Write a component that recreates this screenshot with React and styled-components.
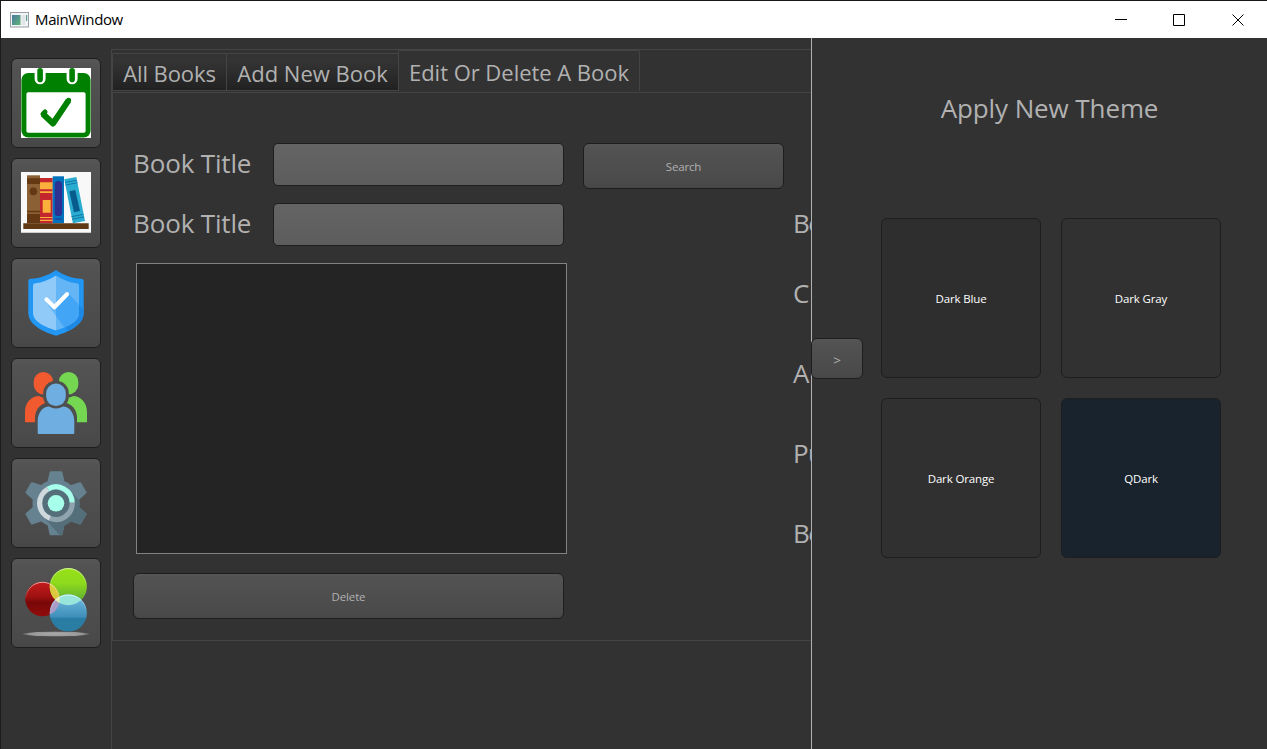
import React from "react";
import styled, { createGlobalStyle } from "styled-components";

const Global = createGlobalStyle`
  *, *::before, *::after { box-sizing: border-box; }
  body { margin: 0; overflow: hidden; background: #323232; }
  button, input { font: inherit; margin: 0; padding: 0; outline: none; }
`;

const Window = styled.div`
  display: flex;
  flex-direction: column;
  width: 1267px;
  height: 749px;
  border-top: 1px solid #17161a;
  border-left: 1px solid #1c1c1c;
  background: #323232;
  color: #b1b1b1;
  font-family: "Open Sans", "Noto Sans", sans-serif;
  font-size: 12px;
  overflow: hidden;
`;

const TitleBar = styled.header`
  display: flex;
  align-items: center;
  flex: none;
  height: 37px;
  padding-left: 9px;
  background: #fff;
  color: #000;
`;

const WindowTitle = styled.span`
  flex: 1;
  margin-left: 6px;
  padding-bottom: 1px;
  font-size: 15px;
  line-height: 20px;
  letter-spacing: -0.36px;
`;

const WindowControl = styled.button`
  display: flex;
  align-items: center;
  justify-content: center;
  width: 58.5px;
  height: 37px;
  border: 0;
  background: transparent;
`;

const Body = styled.div`
  display: flex;
  flex: 1;
  min-height: 0;
`;

const Sidebar = styled.nav`
  display: flex;
  flex-direction: column;
  flex: none;
  gap: 10px;
  width: 110px;
  padding: 20px 0 0 10px;
`;

const PushButton = styled.button`
  display: flex;
  align-items: center;
  justify-content: center;
  flex: none;
  width: ${(p) => p.$w}px;
  height: ${(p) => p.$h}px;
  border: 1px solid #1e1e1e;
  border-radius: 6px;
  background: linear-gradient(#565656, #525252 10%, #4e4e4e 50%, #4a4a4a 90%, #464646);
  color: #b1b1b1;
  font-size: ${(p) => p.$size || 11.5}px;
  padding-top: ${(p) => p.$drop || 0}px;
  letter-spacing: ${(p) => p.$track || 0}px;
`;

const Main = styled.main`
  flex: none;
  width: 700px;
  margin-top: 11px;
  border-top: 1px solid #444;
  border-left: 1px solid #444;
  overflow: hidden;
`;

const Tabs = styled.div`
  display: flex;
  align-items: flex-end;
  height: 41px;
`;

const Tab = styled.div`
  display: flex;
  align-items: center;
  justify-content: center;
  flex: none;
  width: ${(p) => p.$w}px;
  height: ${(p) => (p.$active ? 41 : 38)}px;
  border: 1px solid #444;
  border-right-width: ${(p) => (p.$active ? 1 : 0)}px;
  border-bottom-width: ${(p) => (p.$active ? 0 : 1)}px;
  border-radius: ${(p) => (p.$active ? "2px 2px 0 0" : "2px 0 0 0")};
  padding-top: 2px;
  background: ${(p) => (p.$active ? "#323232" : "linear-gradient(#323232, #343434 20%, #212121)")};
  font-size: 22px;
  line-height: 30px;
  letter-spacing: ${(p) => p.$track}px;
  white-space: nowrap;
`;

const Pane = styled.section`
  display: flex;
  width: 1100px;
  height: 549px;
  margin-top: 1px;
  border: 1px solid #444;
  padding: 50px 0 0 20px;
`;

const Editor = styled.div`
  display: flex;
  flex-direction: column;
  flex: none;
  width: 660px;
`;

const Row = styled.div`
  display: flex;
  align-items: flex-start;
  height: 60px;
`;

const Label = styled.div`
  flex: none;
  width: ${(p) => p.$w || "auto"};
  height: 42px;
  font-size: 26px;
  line-height: 41px;
  letter-spacing: ${(p) => p.$track ?? -0.15}px;
  white-space: nowrap;
`;

const Field = styled.input`
  flex: none;
  width: 291px;
  height: 43px;
  margin-right: 19px;
  border: 1px solid #1e1e1e;
  border-radius: 5px;
  background: linear-gradient(#646464, #5d5d5d);
  color: #b1b1b1;
`;

const BookList = styled.div`
  flex: none;
  width: 431px;
  height: 291px;
  margin: 0 0 19px 3px;
  border: 1px solid #828282;
  background: #242424;
`;

const Details = styled.div`
  display: flex;
  flex-direction: column;
  gap: 38px;
  padding-top: 60px;

  & > :first-child { margin-bottom: -10px; }
`;

const ThemePanel = styled.aside`
  position: relative;
  display: flex;
  flex: 1;
  align-items: flex-start;
  border-left: 1px solid #b1b1b1;
  background: #323232;
`;

const Collapse = styled.div`
  margin: 300px 0 0 -1px;
`;

const Themes = styled.div`
  display: flex;
  flex-direction: column;
  align-items: center;
  width: 376px;
`;

const ThemeHeading = styled.h1`
  margin: 50px 0 90px;
  padding-right: 3px;
  height: 40px;
  font-size: 26px;
  font-weight: 400;
  line-height: 40px;
  letter-spacing: -0.1px;
  white-space: nowrap;
`;

const ThemeGrid = styled.div`
  display: grid;
  grid-template-columns: 160px 160px;
  gap: 20px;
`;

const ThemeTile = styled.button`
  height: 160px;
  border: 1px solid #1e1e1e;
  border-radius: 6px;
  background: ${(p) => p.$bg};
  color: #fff;
  font-size: 11.5px;
  letter-spacing: -0.15px;
`;

const Icon = ({ children }) => (
  <svg width="70" height="70" viewBox="0 0 70 70" fill="none">{children}</svg>
);

const AppIcon = () => (
  <svg width="19" height="16" viewBox="0 0 19 16">
    <defs>
      <linearGradient id="app" x1="0" y1="0" x2="1" y2="1">
        <stop stopColor="#4b79a4" /><stop offset="1" stopColor="#5fb574" />
      </linearGradient>
    </defs>
    <rect x=".5" y=".5" width="18" height="14.5" fill="#f2f4f5" stroke="#9a9fa3" />
    <rect x="2" y="3" width="8.5" height="10" fill="url(#app)" />
    <rect x="11.5" y="3" width="4" height="10" fill="#e2e6e8" />
    <rect x="16" y="3" width="1.2" height="6" fill="#5d9f96" />
  </svg>
);

const CalendarIcon = () => (
  <Icon>
    <path fill="#fff" d="M0 0h70v70H0z" />
    <rect x=".4" y="5" width="69.2" height="64.6" rx="7" fill="#008000" />
    <rect x="5.4" y="24.3" width="59.2" height="40.4" rx="1.8" fill="#fff" />
    <path d="M19.1 0v10.8M51.1 0v10.8" stroke="#fff" strokeWidth="11" strokeLinecap="round" />
    <path d="M19.1 2.8v8.6M51.1 2.8v8.6" stroke="#008000" strokeWidth="5.6" strokeLinecap="round" />
    <path d="M22 46l10 9.5 15.6-23.2" stroke="#008000" strokeWidth="6" strokeLinejoin="round" />
    <path d="M22 46l2-2M47.6 32.3l-1.5 2" stroke="#008000" strokeWidth="5" strokeLinecap="round" />
  </Icon>
);

const BooksIcon = () => (
  <Icon>
    <path fill="#f8f8f8" d="M0 4h70v60.8H0z" />
    <path fill="#8a6034" d="M6 7.3h13v48H6z" />
    <path fill="#633813" d="M6 10.3h13V16H6zM6 42.7h13v1.6H6zM6 46h13v9.3H6z" />
    <circle cx="12.4" cy="23.4" r="3.8" fill="#633813" />
    <path fill="#c4262e" d="M19 10h12.7v45.3H19z" />
    <path fill="#fbb03b" d="M19 14.3h12.7v7H19zM19 23.3h12.7V25H19zM21.7 32h8v12.8h-8zM19 49h12.7v1H19zM19 51.7h12.7v1.2H19z" />
    <path fill="#0071bc" d="M31.7 8.3H43v47H31.7z" />
    <rect x="33.8" y="13" width="7.3" height="35" rx="3.6" fill="#2e3192" />
    <path stroke="#2e3192" d="M34 51h7" />
    <path fill="#2aabd0" d="M43.3 11.3L55.3 9 64 53l-12.1 2.3z" />
    <path fill="#085c8d" d="M48.3 23.2l6-1.2L59 43.1l-6 1.2z" />
    <path stroke="#07699a" strokeWidth=".8" d="M44 14.5L56 12.2M44.5 17L56.5 14.7M50.4 48.7l12-2.3M51 51.2l12-2.3" />
    <path fill="#603813" d="M2.3 55.3h65.4V61H2.3z" />
  </Icon>
);

const ShieldIcon = () => (
  <Icon>
    <defs>
      <clipPath id="shieldOuter"><path d="M35 2C27 7.4 19 10.7 10 10.7Q7.3 11 7.3 13.5v31C7.3 57 22 63.8 35 67.7 48 63.8 62.7 57 62.7 44.5v-31q0-2.5-2.7-2.8C51 10.7 43 7.4 35 2z" /></clipPath>
      <clipPath id="shieldInner"><path d="M35 7.5C28 11.8 21 14.7 14.3 15.2q-2.3.2-2.3 2.6v27C12 54 24 58.8 35 62.5 46 58.8 58 54 58 44.8v-27q0-2.4-2.3-2.6C49 14.7 42 11.8 35 7.5z" /></clipPath>
    </defs>
    <g clipPath="url(#shieldOuter)">
      <path fill="#2196f3" d="M0 0h70v70H0z" />
      <path fill="#1e88e5" d="M47.5 25.5L70 50v20H52L35 46z" />
    </g>
    <g clipPath="url(#shieldInner)">
      <path fill="#90caf9" d="M0 0h35v70H0z" />
      <path fill="#64b5f6" d="M35 0h35v70H35z" />
      <path fill="#64b5f6" d="M24.500 33.500L35 48V39z" />
      <path fill="#42a5f5" d="M47.700 25.500L70 50v20H51L35 48v-9z" />
    </g>
    <path d="M25.500 31.500l7.800 7.700L46 26.300" stroke="#fff" strokeWidth="4.200" strokeLinecap="round" strokeLinejoin="round" />
  </Icon>
);

const PeopleIcon = () => (
  <Icon>
    <rect x="12.7" y="4" width="19.4" height="22.4" rx="9.700" fill="#f1592f" />
    <rect x="37.900" y="4" width="19.400" height="22.400" rx="9.700" fill="#74d651" />
    <path fill="#f1592f" d="M4 54.300V44C4 34 11 28 18 28q5 3 9 0L36 40v14.300z" />
    <path fill="#74d651" d="M66 54.300V44C66 34 59 28 52 28q-5 3-9 0L34 40v14.300z" />
    <path fill="#4e4e4e" d="M14 57V50c0-9 6-14 11-15h20c5 1 11 6 11 15v7z" />
    <rect x="22.200" y="12.800" width="25.600" height="28" rx="12.400" fill="#4f4f4f" />
    <rect x="25.200" y="15.600" width="19.600" height="22.400" rx="9.600" fill="#6faee0" />
    <path fill="#6faee0" d="M16.700 65V53c0-8.500 5.500-14.500 11.300-14.500q7 4 14 0c5.800 0 11.300 6 11.300 14.500v12q0 1-1 1H17.700q-1 0-1-1z" />
  </Icon>
);

const GearIcon = () => (
  <Icon>
    <defs>
      <clipPath id="gear">
        {[0, 60, 120, 180, 240, 300].map((a) => (
          <path key={a} transform={`rotate(${a} 35 35.300)`} d="M29.600 3.300h10.800q.8 0 1 .9l2 9L48 35H22l4.600-21.800 2-9q.2-.9 1-.9z" />
        ))}
        <circle cx="35" cy="35.300" r="23.500" />
      </clipPath>
    </defs>
    <g clipPath="url(#gear)">
      <path fill="#668290" d="M0 0h70v70H0z" />
      <path fill="#546e7a" d="M48 22l22 22v26H41L23 49z" />
    </g>
    <circle cx="35" cy="35.300" r="13.500" fill="#546e7a" />
    <path d="M27 21A16.200 16.200 0 0 1 51.200 34.700" stroke="#a7ffeb" strokeWidth="5.200" />
    <path d="M51.200 34.700A16.200 16.200 0 0 1 29 50.300" stroke="#90a4ae" strokeWidth="5.200" />
    <path d="M29 50.300A16.200 16.200 0 0 1 27 21" stroke="#cfd8dc" strokeWidth="5.200" />
    <circle cx="35" cy="35.300" r="8.300" fill="#a7ffeb" />
  </Icon>
);

const ColorsIcon = () => (
  <Icon>
    <defs>
      <linearGradient id="red" x2="0" y2="1"><stop stopColor="#c51c1c" /><stop offset=".45" stopColor="#9c1111" /><stop offset=".6" stopColor="#780808" /><stop offset="1" stopColor="#920b0b" /></linearGradient>
      <linearGradient id="green" x2="0" y2="1"><stop stopColor="#98e018" /><stop offset=".4" stopColor="#8edb1c" /><stop offset="1" stopColor="#55a23b" /></linearGradient>
      <linearGradient id="blue" x2="0" y2="1"><stop stopColor="#72bfe2" /><stop offset=".6" stopColor="#408fbb" /><stop offset=".65" stopColor="#297ca4" /><stop offset="1" stopColor="#2b7da2" /></linearGradient>
      <linearGradient id="shine" x2="0" y2="1"><stop stopColor="#fff" stopOpacity=".6" /><stop offset=".5" stopColor="#fff" stopOpacity="0" /></linearGradient>
      <radialGradient id="floor"><stop stopColor="#aaa" /><stop offset=".8" stopColor="#989898" /><stop offset="1" stopColor="#666" stopOpacity=".4" /></radialGradient>
      <clipPath id="inGreen"><circle cx="47.300" cy="18.600" r="18.600" /></clipPath>
      <clipPath id="inBlue"><circle cx="47.300" cy="45" r="18.600" /></clipPath>
    </defs>
    <ellipse cx="35" cy="66" rx="34" ry="2.700" fill="url(#floor)" />
    <circle cx="21.500" cy="31" r="17.300" fill="url(#red)" />
    <circle cx="47.300" cy="18.600" r="18.600" fill="url(#green)" />
    <circle cx="47.300" cy="45" r="18.600" fill="url(#blue)" />
    <circle cx="21.500" cy="31" r="17.300" fill="#dcc83f" clipPath="url(#inGreen)" />
    <circle cx="21.500" cy="31" r="17.300" fill="#a99cc8" clipPath="url(#inBlue)" />
    <circle cx="47.300" cy="18.600" r="18.600" fill="#98e5dc" clipPath="url(#inBlue)" />
    <g clipPath="url(#inGreen)"><circle cx="21.500" cy="31" r="17.300" fill="#e9edaf" clipPath="url(#inBlue)" /></g>
    <g stroke="url(#shine)">
      <circle cx="21.500" cy="31" r="16.700" />
      <circle cx="47.300" cy="18.600" r="18" />
      <circle cx="47.300" cy="45" r="18" />
    </g>
  </Icon>
);

const sections = [
  ["Today", CalendarIcon],
  ["Books", BooksIcon],
  ["Security", ShieldIcon],
  ["Users", PeopleIcon],
  ["Settings", GearIcon],
  ["Themes", ColorsIcon],
];

const controls = [
  ["Minimize", "M0 5.500h12"],
  ["Maximize", "M.5.500h11v11H.5z"],
  ["Close", "M.5.500l11 11M11.500.500l-11 11"],
];

const themes = [
  ["Dark Blue", "#2e2e2e"],
  ["Dark Gray", "#313131"],
  ["Dark Orange", "#303030"],
  ["QDark", "#19232d"],
];

export default function App() {
  return (
    <Window>
      <Global />
      <TitleBar>
        <AppIcon />
        <WindowTitle>MainWindow</WindowTitle>
        {controls.map(([name, d]) => (
          <WindowControl key={name} aria-label={name}>
            <svg width="12" height="12" fill="none" stroke="#000"><path d={d} /></svg>
          </WindowControl>
        ))}
      </TitleBar>
      <Body>
        <Sidebar>
          {sections.map(([name, Glyph]) => (
            <PushButton key={name} $w={90} $h={90} aria-label={name}><Glyph /></PushButton>
          ))}
        </Sidebar>
        <Main>
          <Tabs>
            <Tab $w={114} $track={-0.1}>All Books</Tab>
            <Tab $w={172} $track={0}>Add New Book</Tab>
            <Tab $w={242} $track={-0.03} $active>Edit Or Delete A Book</Tab>
          </Tabs>
          <Pane>
            <Editor>
              <Row>
                <Label $w="140px">Book Title</Label>
                <Field />
                <PushButton $w={201} $h={46} $track={-0.15}>Search</PushButton>
              </Row>
              <Row>
                <Label $w="140px">Book Title</Label>
                <Field />
              </Row>
              <BookList />
              <PushButton $w={431} $h={46} $track={-0.15}>Delete</PushButton>
            </Editor>
            <Details>
              <Label $track={-1.6}>Bo</Label>
              <Label>C</Label>
              <Label $track={-0.3}>Au</Label>
              <Label $track={-0.6}>Pu</Label>
              <Label $track={-1.6}>Bo</Label>
            </Details>
          </Pane>
        </Main>
        <ThemePanel>
          <Collapse>
            <PushButton $w={52} $h={41} $size={13.5} $drop={2}>&gt;</PushButton>
          </Collapse>
          <Themes>
            <ThemeHeading>Apply New Theme</ThemeHeading>
            <ThemeGrid>
              {themes.map(([name, bg]) => (
                <ThemeTile key={name} $bg={bg}>{name}</ThemeTile>
              ))}
            </ThemeGrid>
          </Themes>
        </ThemePanel>
      </Body>
    </Window>
  );
}
